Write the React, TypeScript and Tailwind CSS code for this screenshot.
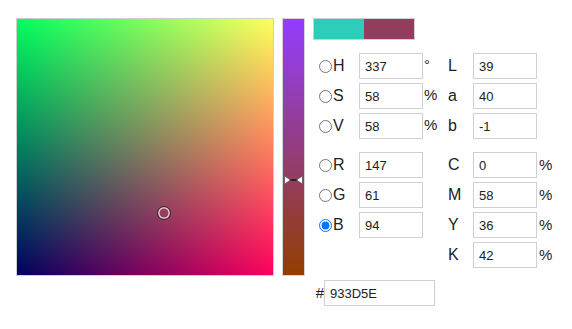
import React from "react";

const font = { fontFamily: '"Liberation Sans", Arial, sans-serif' };

function Radio({ checked = false }: { checked?: boolean }) {
  return (
    <input
      type="radio"
      name="mode"
      defaultChecked={checked}
      className="m-0 ml-[6px] mr-[1px] h-[13px] w-[13px] shrink-0"
    />
  );
}

function Field({ value, w = "w-[64px]" }: { value: string; w?: string }) {
  return (
    <input
      type="text"
      defaultValue={value}
      className={`${w} h-[26px] shrink-0 border border-[#d0d0d0] bg-white pl-[5px] text-[13px] text-[#222] outline-none`}
      style={font}
    />
  );
}

function Row({
  radio,
  label,
  value,
  unit,
  label2,
  value2,
  unit2,
  checked,
}: {
  radio?: boolean;
  label?: string;
  value?: string;
  unit?: string;
  label2: string;
  value2: string;
  unit2?: string;
  checked?: boolean;
}) {
  return (
    <div className="flex h-[26px] items-center text-[15px] text-[#222]">
      {radio ? (
        <>
          <div className="flex w-[46px] items-center">
            <Radio checked={checked} />
            <span className="text-[16px] leading-none">{label}</span>
          </div>
          <Field value={value ?? ""} />
          <span className="w-[25px] pl-[1px] self-start pt-[2px] leading-[20px]">{unit}</span>
        </>
      ) : (
        <div className="w-[135px] shrink-0" />
      )}
      <span className="w-[25px] shrink-0 text-[16px]">{label2}</span>
      <Field value={value2} />
      <span className="pl-[2px]">{unit2}</span>
    </div>
  );
}

export default function App() {
  return (
    <div className="flex items-start bg-white pl-[16px] pt-[18px]" style={font}>
      {/* SV field */}
      <div className="border border-[#cfcfcf] shrink-0">
        <div className="relative h-[256px] w-[256px] bg-[linear-gradient(to_bottom,#00ff00,#000000),linear-gradient(to_right,#00005e,#ff005e)] bg-blend-screen">
          <div className="absolute left-[140px] top-[187px] h-[14px] w-[14px] rounded-full border border-[#2a2a2a] shadow-[inset_0_0_0_1.5px_#e8d0da]" />
        </div>
      </div>

      {/* channel bar */}
      <div className="ml-[8px] border border-[#d4d4d4] shrink-0">
        <div className="relative h-[256px] w-[21px] bg-[linear-gradient(to_bottom,#933dff,#933d00)]">
          <svg
            className="absolute left-[1px] top-[156px]"
            width="19"
            height="10"
            viewBox="0 0 19 10"
          >
            <line x1="5" y1="5" x2="14" y2="5" stroke="#1a1a1a" strokeWidth="1.6" />
            <path d="M0.6 1 L6.5 5 L0.6 9 Z" fill="#fff" stroke="#555" strokeWidth="0.7" />
            <path d="M18.4 1 L12.5 5 L18.4 9 Z" fill="#fff" stroke="#555" strokeWidth="0.7" />
          </svg>
        </div>
      </div>

      {/* right panel */}
      <div className="ml-[8px] flex flex-col">
        <div className="flex w-[102px] border border-[#d0d0d0]">
          <div className="h-[20px] w-[50px] bg-[#2ecdb9]" />
          <div className="h-[20px] w-[50px] bg-[#933d5e]" />
        </div>

        <div className="mt-[13px] flex flex-col gap-[4px]">
          <Row radio label="H" value="337" unit="°" label2="L" value2="39" />
          <Row radio label="S" value="58" unit="%" label2="a" value2="40" />
          <Row radio label="V" value="58" unit="%" label2="b" value2="-1" />
        </div>

        <div className="mt-[13px] flex flex-col gap-[4px]">
          <Row radio label="R" value="147" label2="C" value2="0" unit2="%" />
          <Row radio label="G" value="61" label2="M" value2="58" unit2="%" />
          <Row radio checked label="B" value="94" label2="Y" value2="36" unit2="%" />
          <Row label2="K" value2="42" unit2="%" />
        </div>

        <div className="mt-[12px] flex items-center text-[15px] text-[#222]">
          <span className="w-[11px] text-right">#</span>
          <Field value="933D5E" w="w-[111px]" />
        </div>
      </div>
    </div>
  );
}
